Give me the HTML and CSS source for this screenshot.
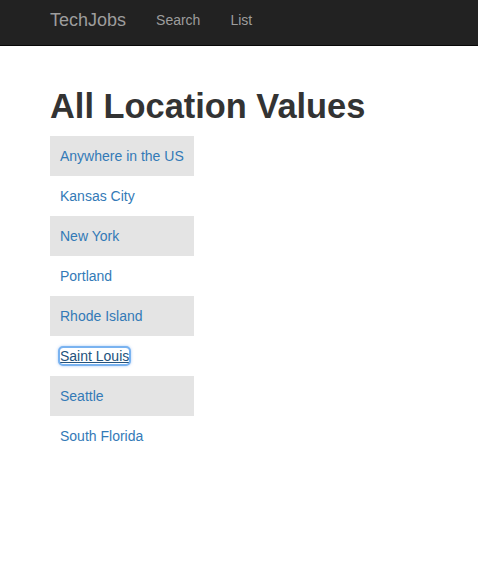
FILE: index.html
```html
<!DOCTYPE html>
<html>
<head>
<meta charset="utf-8">
<link rel="stylesheet" href="styles.css">
</head>
<body>
<nav class="navbar">
  <a class="brand" href="#">TechJobs</a>
  <a class="nav-link" href="#">Search</a>
  <a class="nav-link" href="#">List</a>
</nav>
<main class="content">
  <h1 class="title">All Location Values</h1>
  <table class="values">
    <tr class="shaded"><td><a href="#">Anywhere in the US</a></td></tr>
    <tr><td><a href="#">Kansas City</a></td></tr>
    <tr class="shaded"><td><a href="#">New York</a></td></tr>
    <tr><td><a href="#">Portland</a></td></tr>
    <tr class="shaded"><td><a href="#">Rhode Island</a></td></tr>
    <tr><td><a class="focused" href="#">Saint Louis</a></td></tr>
    <tr class="shaded"><td><a href="#">Seattle</a></td></tr>
    <tr><td><a href="#">South Florida</a></td></tr>
  </table>
</main>
</body>
</html>
```

FILE: styles.css
```css
* { box-sizing: border-box; }
body {
  margin: 0;
  font-family: "Liberation Sans", Arial, Helvetica, sans-serif;
  font-size: 14px;
  color: #333;
  background: #fff;
}
.navbar {
  height: 46px;
  background: #222;
  border-bottom: 1px solid #080808;
  display: flex;
  align-items: center;
  padding-left: 50px;
  padding-bottom: 5px;
}
.brand {
  color: #9d9d9d;
  font-size: 18px;
  text-decoration: none;
  margin-right: 30px;
}
.nav-link {
  color: #9d9d9d;
  font-size: 14px;
  text-decoration: none;
  margin-right: 30px;
}
.content {
  padding-left: 50px;
}
.title {
  font-size: 34.4px;
  font-weight: bold;
  margin: 42px 0 10px;
  line-height: 1.1;
  color: #333;
}
.values {
  border-collapse: collapse;
  width: 144px;
}
.values td {
  height: 40px;
  padding: 0 10px;
  white-space: nowrap;
}
.values tr.shaded td { background: #e4e4e4; }
.values a {
  color: #337ab7;
  text-decoration: none;
}
.values a.focused {
  color: #23527c;
  text-decoration: underline;
  outline: 2px solid #7ab3f0;
  outline-offset: 0;
  border-radius: 3px;
  box-shadow: 0 0 3px 2px rgba(100,160,240,0.55);
}
```
